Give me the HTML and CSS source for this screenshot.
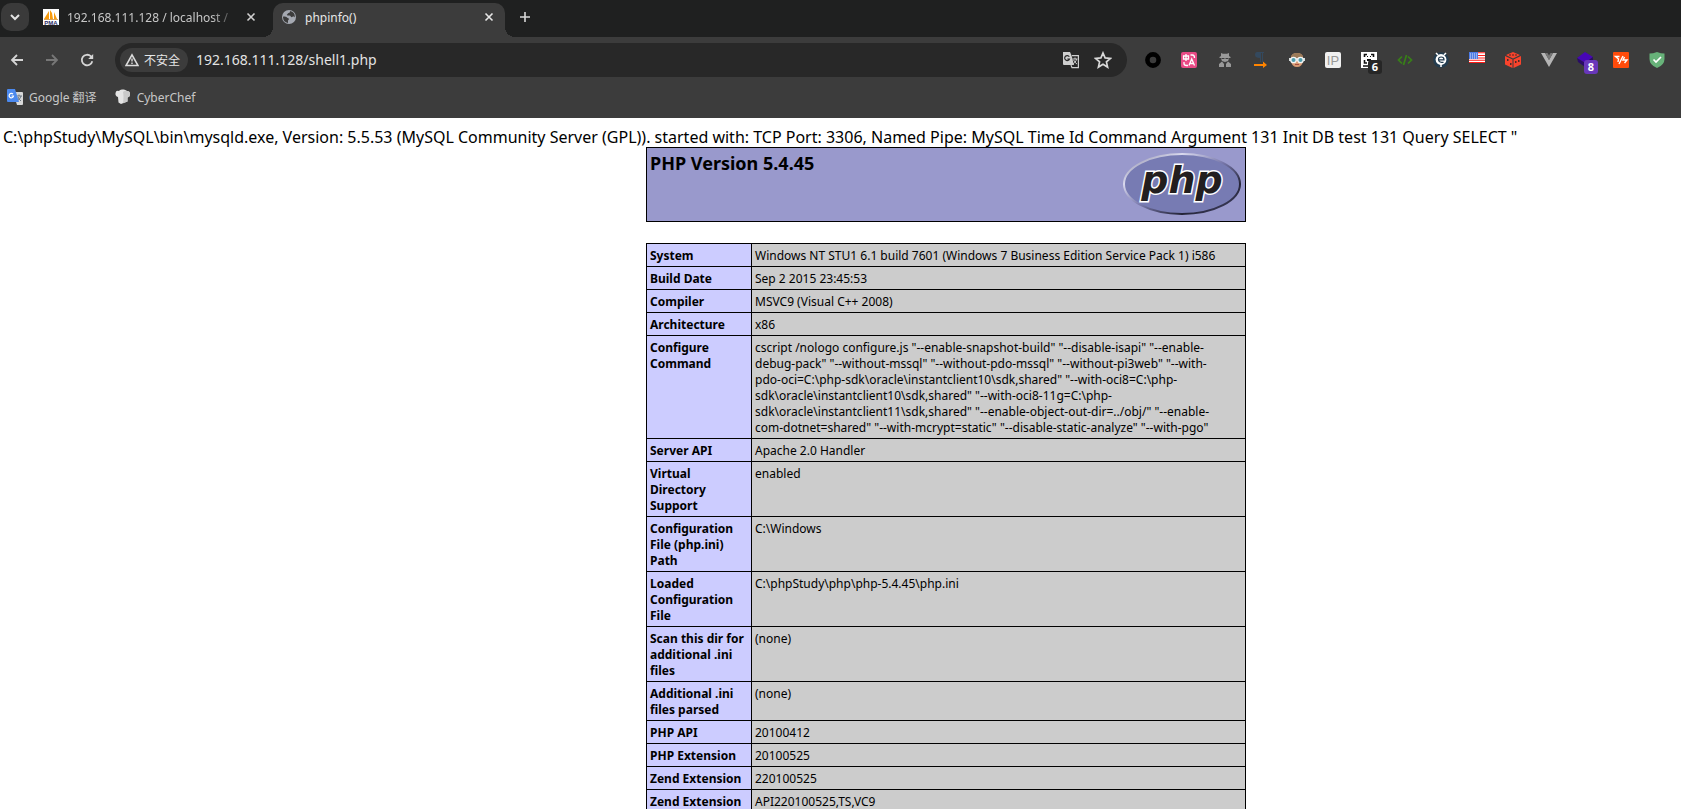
FILE: index.html
```html
<!DOCTYPE html>
<html lang="zh-CN">
<head>
<meta charset="utf-8">
<title>phpinfo()</title>
<link rel="stylesheet" href="styles.css">
</head>
<body>
<header class="browser">
  <div class="tabstrip">
    <button class="tab-search" aria-label="Search tabs"><svg width="26" height="28" viewBox="0 0 26 28"><path d="M9 12l4 4 4-4" fill="none" stroke="#e3e3e3" stroke-width="2"/></svg></button>
    <div class="tab">
      <svg width="16" height="16" viewBox="0 0 16 16"><path fill="#fff" d="M0 0h16v16H0z"/><path fill="#f89c0e" d="M1 10L6 2v8zM7 10V1l2 3 1 6zM11 10V3l3 7z"/><path fill="#dba55a" d="M1 10h14v1H1z"/><text x="8" y="16" class="pma" text-anchor="middle">PMA</text></svg>
      <span class="tab-title faded">192.168.111.128 / localhost /</span>
      <button class="close" aria-label="Close tab"><svg width="10" height="10" viewBox="0 0 10 10"><path d="M1.500 1.500l7 7m0-7l-7 7" stroke="#d0d0d0" stroke-width="1.600"/></svg></button>
    </div>
    <div class="tab active">
      <svg width="16" height="16" viewBox="0 0 16 16"><circle cx="8" cy="8" r="7" fill="#a5a9b2"/><path d="M2.200 7.500c2 0 3.200.2 4 1.200.6.700 1.700.3 1.700 1.300 0 1-.9.800-.9 1.700v2.200A6 6 0 0 1 2 8.500zM9 2.100c0 1.200-.3 1.900-1.300 1.900-1.200 0-.8 1.500-1.900 1.700 0 1 1.700.8 2.800.9 1.100.1.900 1.600 2 1.600s1-1 1.900-.8c.8.100 1.100.6 1.300.9A6 6 0 0 0 9 2.100z" fill="#3c3c3c"/></svg>
      <span class="tab-title">phpinfo()</span>
      <button class="close" aria-label="Close tab"><svg width="10" height="10" viewBox="0 0 10 10"><path d="M1.500 1.500l7 7m0-7l-7 7" stroke="#e6e6e6" stroke-width="1.600"/></svg></button>
    </div>
    <button class="new-tab" aria-label="New tab"><svg width="12" height="12" viewBox="0 0 12 12"><path d="M6 1v10M1 6h10" stroke="#d8d8d8" stroke-width="1.600"/></svg></button>
  </div>
  <nav class="toolbar">
    <button class="nav" aria-label="Back"><svg width="16" height="16" viewBox="0 0 16 16"><path d="M14 8H3m5-5L3 8l5 5" fill="none" stroke="#d5d5d5" stroke-width="1.800"/></svg></button>
    <button class="nav" aria-label="Forward"><svg width="16" height="16" viewBox="0 0 16 16"><path d="M2 8h11M8 3l5 5-5 5" fill="none" stroke="#777" stroke-width="1.800"/></svg></button>
    <button class="nav" aria-label="Reload"><svg width="16" height="16" viewBox="0 0 16 16"><path d="M13.300 9.300a5.300 5.300 0 1 1-1.500-5.100L13.500 6" fill="none" stroke="#d5d5d5" stroke-width="1.800"/><path d="M14.200 2v5H9.200z" fill="#d5d5d5"/></svg></button>
    <div class="omnibox">
      <button class="security"><svg width="14" height="14" viewBox="0 0 14 14"><path d="M7 1.800L13 12.500H1z" fill="none" stroke="#dcdcdc" stroke-width="1.600"/><path d="M7 5.500v3M7 9.500V11" stroke="#dcdcdc" stroke-width="1.400"/></svg>不安全</button>
      <input class="address" aria-label="Address" value="192.168.111.128/shell1.php">
      <button class="action" aria-label="Translate"><svg width="18" height="18" viewBox="0 0 18 18"><path d="M1 1h7l1.500 3.500L12 14H2a1 1 0 0 1-1-1z" fill="#cfcfcf"/><path d="M7.300 5.700A2.500 2.500 0 1 0 7.500 8H5.300" fill="none" stroke="#282828" stroke-width="1.200"/><path d="M10 4.600h6.400v12H10l-1-2.500" fill="none" stroke="#cfcfcf" stroke-width="1.200"/><path d="M10.500 8h5M13 6.500V8m1.500 0c-.3 2.500-2 4-3.500 5m.7-4c.6 1.800 2 3 3.300 4" fill="none" stroke="#cfcfcf"/></svg></button>
      <button class="action" aria-label="Bookmark"><svg width="18" height="18" viewBox="0 0 18 18"><path d="M9 2l2.100 4.900 5.300.5-4 3.500 1.200 5.200L9 13.300l-4.600 2.800 1.200-5.200-4-3.500 5.300-.5z" fill="none" stroke="#d8d8d8" stroke-width="1.700"/></svg></button>
    </div>
    <div class="extensions">
      <button aria-label="Proxy"><svg width="16" height="16" viewBox="0 0 16 16"><circle cx="8" cy="8" r="5.600" fill="none" stroke="#000" stroke-width="4.600"/></svg></button>
      <button aria-label="Translator"><svg width="16" height="16" viewBox="0 0 16 16"><rect width="16" height="16" rx="2" fill="#e94b86"/><path d="M2.500 4h5v3h-5zM5 2v7M9.500 3h2q2 0 2 3M3 10v1.500q0 2 2.500 2H7M8 13.500L10.700 7l2.800 6.500M9 11.500h3.500" fill="none" stroke="#fff" stroke-width="1.300"/></svg></button>
      <button aria-label="Agent"><svg width="16" height="16" viewBox="0 0 16 16" fill="#999"><path d="M4 1l2 .8h4L12 1v3l1.500 1v1h-11V5L4 4zM4 6.500h8L11 9 8 10 5 9zM2 15v-3l3-2.500L7 12v3zM14 15v-3l-3-2.500L9 12v3z"/><path d="M5 6h2v1H5zm4 0h2v1H9z" fill="#3c3c3c"/></svg></button>
      <button aria-label="Pilcrow"><svg width="16" height="16" viewBox="0 0 16 16"><path d="M4 0h7v1h-1v9H9V1H8v9H7V6Q2 6 2 3T4 0z" fill="#34495e"/><path d="M1 12h9V9.500L14 13l-4 3v-2H1z" fill="#ff8400"/></svg></button>
      <button aria-label="Goggles"><svg width="16" height="16" viewBox="0 0 16 16"><path d="M2 9V5q1-4 6-4t6 4v4q-1 6-6 6T2 9z" fill="#d79a72"/><path d="M2 6q0-5 6-5t6 5z" fill="#9a7a59"/><path d="M0 6h16v3H0z" fill="#d9dddd"/><circle cx="4.500" cy="8" r="2.700" fill="#4e9dad" stroke="#f4f4f4" stroke-width="1.300"/><circle cx="11.500" cy="8" r="2.700" fill="#4e9dad" stroke="#f4f4f4" stroke-width="1.300"/><path d="M6 12.500h4" stroke="#a24d42"/></svg></button>
      <button aria-label="IP"><svg width="16" height="16" viewBox="0 0 16 16"><rect width="16" height="16" rx="2" fill="#f0f0f0"/><text x="8" y="13" class="ip" text-anchor="middle">IP</text></svg></button>
      <button aria-label="QR codes"><svg width="16" height="16" viewBox="0 0 16 16"><path fill="#fff" d="M0 0h16v16H0z"/><path d="M3.500 5V2.500H6m4 0h2.500V5M3.500 8v3H6m4 0h2.500V8M2 14h5" fill="none" stroke="#111" stroke-width="1.600"/><path d="M6 4h1v1H6zm3 0h1v1H9zM6 7h4v2H6z" fill="#111"/></svg><span class="badge">6</span></button>
      <button aria-label="Source"><svg width="16" height="16" viewBox="0 0 16 16"><path d="M5 4.500L1.500 8 5 11.500M11 4.500L14.500 8 11 11.500M9.500 3l-3 10" fill="none" stroke="#388017" stroke-width="1.700"/></svg></button>
      <button aria-label="Editor"><svg width="16" height="16" viewBox="0 0 16 16"><circle cx="8" cy="8" r="7.800" fill="#243d50"/><path d="M3 1l2 2M13 1l-2 2M8 12v3" stroke="#fff" stroke-width="1.500"/><circle cx="8" cy="7.500" r="5.400" fill="#fff"/><path d="M5 7.800h6Q11 5 8.200 5T5.500 7.800q.3 2.500 3 2.500h2" fill="none" stroke="#243d50" stroke-width="1.200"/></svg></button>
      <button aria-label="Location"><svg width="16" height="16" viewBox="0 0 16 16"><path d="M0 0h16v11H0z" fill="#fff"/><path d="M0 .800h16M8 3.500h8M8 6h8M0 8.200h16M0 10.500h16" stroke="#ff1b16" stroke-width="1.100"/><path d="M0 0h9v7H0z" fill="#4c7be5"/><path d="M1 2h8M1 4h8M1 6h8" stroke="#fff" stroke-width=".8" stroke-dasharray="1 1"/></svg></button>
      <button aria-label="Dice"><svg width="16" height="16" viewBox="0 0 16 16"><path d="M8 0l7 3-7 3.500L1 3zM0 4l7.500 3.500V16L0 12.500zM16 4L8.500 7.500V16l7.500-3.500z" fill="#f9432c"/><path d="M4 2.500h2v1H4zm3 0h2v1H7zm3 0h2v1h-2zM2 7h1.500v2H2zm3 4h1.500v2H5zm5-2h1.500v2H10zm3-1h1.500v2H13z" fill="#4b2a27"/></svg></button>
      <button aria-label="Vue"><svg width="16" height="16" viewBox="0 0 16 16"><path d="M0 1h4l4 7 4-7h4L8 15z" fill="#b5b5b5"/><path d="M4 1h2.500L8 3.500 9.500 1H12L8 8z" fill="#777"/></svg></button>
      <button aria-label="Modules"><svg width="16" height="16" viewBox="0 0 16 16"><path d="M8 0l8 5-8 6-8-5z" fill="#4706b5"/><path d="M0 6l8 5v4L1 10zM8 11l8-6v4l-8 6z" fill="#290c66"/></svg><span class="badge violet">8</span></button>
      <button aria-label="Wappalyzer"><svg width="16" height="16" viewBox="0 0 16 16"><rect width="16" height="16" rx="1" fill="#ff4b0b"/><path d="M6.500 4.500H2.500L5.500 7 5 10M10 4L6 12M11.500 5L10 8h4l-2.500 3" fill="none" stroke="#fff" stroke-width="1.400"/></svg></button>
      <button aria-label="Shield"><svg width="16" height="16" viewBox="0 0 16 16"><path d="M8 0q4 1.500 7.500 1.500V7Q15.500 13 8 16 .5 13 .5 7V1.500Q4 1.500 8 0z" fill="#67b279"/><path d="M4.500 7.500L7 10l5-5" fill="none" stroke="#fff" stroke-width="1.700"/></svg></button>
    </div>
  </nav>
  <div class="bookmarks">
    <a class="bookmark" href="#"><svg width="16" height="16" viewBox="0 0 16 16"><path d="M6 3h9q1 0 1 1v11q0 1-1 1H10z" fill="#d8d8d8"/><path d="M9 7h6m-3-1.500V7m2 0q-.5 3-4 5m1-4q1 2.500 3 4" fill="none" stroke="#687582"/><path d="M1 0h7l4 13H1q-1 0-1-1V1q0-1 1-1z" fill="#4b89ef"/><path d="M6 5.200A2.200 2.200 0 1 0 6.500 7H4.500" fill="none" stroke="#fff" stroke-width="1.200"/></svg>Google 翻译</a>
    <a class="bookmark" href="#"><svg width="16" height="16" viewBox="0 0 16 16"><path d="M3 8Q0 7 .5 4T4 2Q5 0 8 .5q2-.5 4 1.500 3 0 3 3t-2.500 3.500v4L6 15l-2.500-1.500z" fill="#e4e4e4"/><path d="M8 3q1 4 0 11.300l4.500-1.800v-4Q15 8 15 5t-3-3q-2-1.500-4 1z" fill="#c9c9c9"/></svg>CyberChef</a>
  </div>
</header>
<main class="page">
  <p class="log">C:\phpStudy\MySQL\bin\mysqld.exe, Version: 5.5.53 (MySQL Community Server (GPL)). started with: TCP Port: 3306, Named Pipe: MySQL Time Id Command Argument 131 Init DB test 131 Query SELECT "</p>
  <div class="center">
    <div class="banner">
      <h1>PHP Version 5.4.45</h1>
      <svg class="logo" width="120" height="67" viewBox="0 0 120 67" role="img" aria-label="PHP logo">
        <defs><linearGradient id="rim" x1="0" y1="0" x2="1" y2="1"><stop offset="0" stop-color="#85859f"/><stop offset=".25" stop-color="#d9d9ee"/><stop offset=".5" stop-color="#7777aa"/><stop offset=".75" stop-color="#242437"/><stop offset="1" stop-color="#494970"/></linearGradient></defs>
        <ellipse cx="60" cy="33" rx="58" ry="30" fill="#777bb3" stroke="url(#rim)" stroke-width="2"/>
        <text x="60" y="42" text-anchor="middle" class="logo-text">php</text>
      </svg>
    </div>
    <table class="info">
      <tr><th scope="row">System</th><td>Windows NT STU1 6.1 build 7601 (Windows 7 Business Edition Service Pack 1) i586</td></tr>
      <tr><th scope="row">Build Date</th><td>Sep 2 2015 23:45:53</td></tr>
      <tr><th scope="row">Compiler</th><td>MSVC9 (Visual C++ 2008)</td></tr>
      <tr><th scope="row">Architecture</th><td>x86</td></tr>
      <tr><th scope="row">Configure<br>Command</th><td>cscript /nologo configure.js "--enable-snapshot-build" "--disable-isapi" "--enable-<br>debug-pack" "--without-mssql" "--without-pdo-mssql" "--without-pi3web" "--with-<br>pdo-oci=C:\php-sdk\oracle\instantclient10\sdk,shared" "--with-oci8=C:\php-<br>sdk\oracle\instantclient10\sdk,shared" "--with-oci8-11g=C:\php-<br>sdk\oracle\instantclient11\sdk,shared" "--enable-object-out-dir=../obj/" "--enable-<br>com-dotnet=shared" "--with-mcrypt=static" "--disable-static-analyze" "--with-pgo"</td></tr>
      <tr><th scope="row">Server API</th><td>Apache 2.0 Handler</td></tr>
      <tr><th scope="row">Virtual<br>Directory<br>Support</th><td>enabled</td></tr>
      <tr><th scope="row">Configuration<br>File (php.ini)<br>Path</th><td>C:\Windows</td></tr>
      <tr><th scope="row">Loaded<br>Configuration<br>File</th><td>C:\phpStudy\php\php-5.4.45\php.ini</td></tr>
      <tr><th scope="row">Scan this dir for<br>additional .ini<br>files</th><td>(none)</td></tr>
      <tr><th scope="row">Additional .ini<br>files parsed</th><td>(none)</td></tr>
      <tr><th scope="row">PHP API</th><td>20100412</td></tr>
      <tr><th scope="row">PHP Extension</th><td>20100525</td></tr>
      <tr><th scope="row">Zend Extension</th><td>220100525</td></tr>
      <tr><th scope="row">Zend Extension</th><td>API220100525,TS,VC9</td></tr>
    </table>
  </div>
</main>
</body>
</html>
```

FILE: styles.css
```css
* { box-sizing: border-box; }
body {
  margin: 0;
  height: 100vh;
  display: flex;
  flex-direction: column;
  overflow: hidden;
  background: #fff;
  color: #000;
  font-family: "Noto Sans", "Noto Sans CJK SC", sans-serif;
}
button {
  border: 0;
  padding: 0;
  background: none;
  color: inherit;
  font: inherit;
  display: flex;
  align-items: center;
  justify-content: center;
}
svg { display: block; flex: none; }

.browser {
  flex: none;
  background: #3c3c3c;
  color: #dedede;
  font-size: 12px;
}
.tabstrip {
  height: 37px;
  display: flex;
  align-items: flex-start;
  padding-top: 3px;
  background: #1f2020;
}
.tab-search {
  width: 28px;
  height: 28px;
  margin-left: 1px;
  border-radius: 10px;
  background: #3a3a3a;
}
.tab {
  width: 232px;
  height: 34px;
  display: flex;
  align-items: center;
  gap: 8px;
  padding: 0 10px 6px 8px;
  margin-left: 6px;
  color: #c7c7c7;
}
.tab-title {
  flex: 1;
  overflow: hidden;
  white-space: nowrap;
}
.faded {
  -webkit-mask-image: linear-gradient(90deg, #000 85%, transparent);
  mask-image: linear-gradient(90deg, #000 85%, transparent);
}
.tab.active {
  position: relative;
  border-radius: 10px 10px 0 0;
  background: #3c3c3c;
  color: #e6e6e6;
}
.tab.active::before,
.tab.active::after {
  content: "";
  position: absolute;
  bottom: 0;
  width: 10px;
  height: 10px;
}
.tab.active::before {
  right: 100%;
  background: radial-gradient(circle at 0 0, #1f2020 10px, #3c3c3c 10px);
}
.tab.active::after {
  left: 100%;
  background: radial-gradient(circle at 100% 0, #1f2020 10px, #3c3c3c 10px);
}
.close { width: 12px; height: 16px; }
.new-tab { width: 28px; height: 28px; margin-left: 6px; }
.pma { font: bold 6px "Liberation Sans", sans-serif; fill: #2c2c66; }
.ip { font: 13px "Liberation Sans", sans-serif; fill: #999; }

.toolbar {
  height: 45px;
  display: flex;
  align-items: center;
}
.nav { width: 35px; height: 34px; }
.nav:first-child { width: 34px; }
.omnibox {
  flex: 1;
  height: 34px;
  display: flex;
  align-items: center;
  margin-left: 11px;
  padding: 0 8px 0 5px;
  border-radius: 17px;
  background: #282828;
}
.security {
  height: 24px;
  gap: 5px;
  padding: 0 8px 0 5px;
  border-radius: 12px;
  background: #3c3c3c;
  color: #e6e6e6;
}
.address {
  flex: 1;
  min-width: 0;
  margin-left: 8px;
  padding: 0;
  border: 0;
  background: none;
  color: #e3e3e3;
  font: inherit;
  font-size: 14px;
}
.action { width: 32px; height: 30px; }
.extensions {
  display: flex;
  padding: 0 6px 0 8px;
}
.extensions button { position: relative; width: 36px; height: 34px; }
.badge {
  position: absolute;
  left: 17px;
  top: 17px;
  width: 14px;
  height: 14px;
  border-radius: 3px;
  background: #262626;
  color: #fff;
  font-size: 11px;
  font-weight: bold;
  line-height: 14px;
}
.violet { background: #6837b9; }

.bookmarks {
  height: 36px;
  display: flex;
  align-items: center;
  gap: 18px;
  padding: 0 7px 6px;
}
.bookmark {
  display: flex;
  align-items: center;
  gap: 6px;
  color: #c7c7c7;
  text-decoration: none;
}

.page { flex: 1; min-height: 0; overflow: hidden; }
.log {
  margin: 0;
  padding: 10px 3px 0;
  font-size: 16px;
  line-height: 19px;
  white-space: nowrap;
}
.center {
  display: flex;
  flex-direction: column;
  align-items: center;
  gap: 21px;
  padding-left: 211px;
}
.banner {
  width: 600px;
  display: flex;
  justify-content: space-between;
  padding: 3px;
  border: 1px solid #000;
  background: #9999cc;
}
h1 { margin: 0; font-size: 18px; line-height: 24px; }
.logo-text {
  font: italic bold 38px "DejaVu Sans", sans-serif;
  fill: #221e1f;
  stroke: #fff;
  stroke-width: 3px;
  paint-order: stroke;
}
.info {
  width: 600px;
  table-layout: fixed;
  border-collapse: collapse;
  font-size: 12px;
  line-height: 16px;
}
.info th,
.info td {
  padding: 4px 3px 2px;
  border: 1px solid #000;
  text-align: left;
  vertical-align: top;
  white-space: nowrap;
}
.info th { width: 105px; background: #ccccff; }
.info td { background: #cccccc; }
```
